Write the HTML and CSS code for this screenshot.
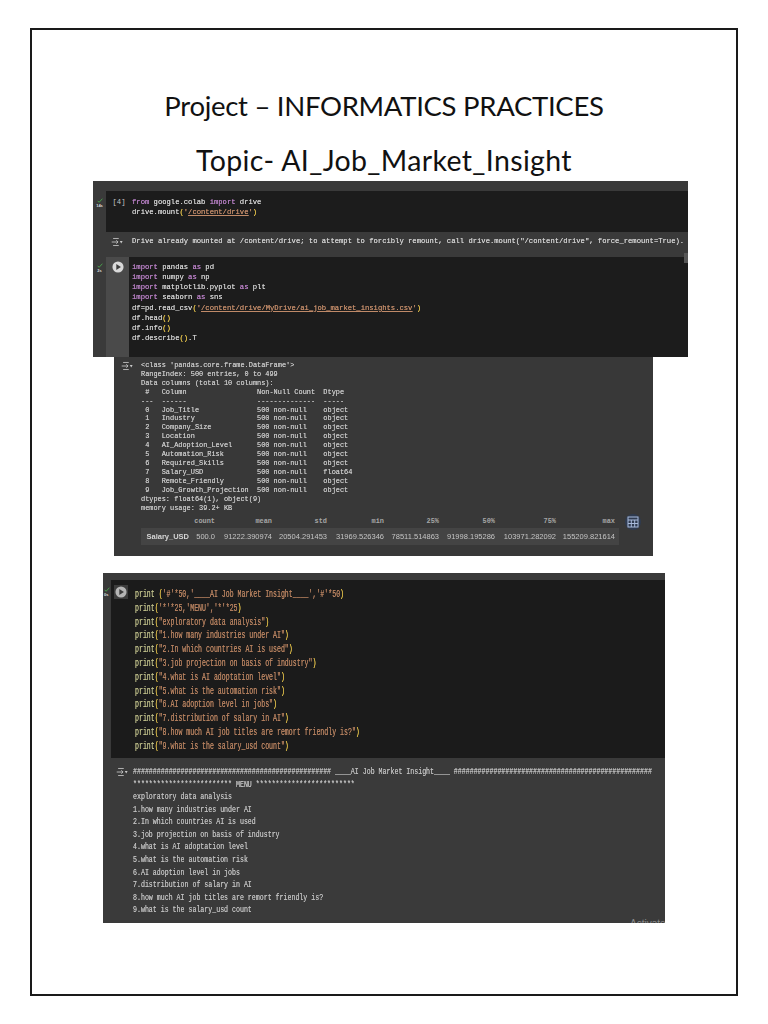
FILE: index.html
```html
<!DOCTYPE html>
<html lang="en">
<head>
<meta charset="utf-8">
<title>Project – INFORMATICS PRACTICES</title>
<link rel="stylesheet" href="styles.css">
</head>
<body>
<main class="page">
  <h1 class="title title-first">Project – INFORMATICS PRACTICES</h1>
  <h2 class="title title-second">Topic- AI_Job_Market_Insight</h2>

  <section class="shot shot-a">
    <div class="cell cell-a1">
      <div class="status"><svg class="check" viewBox="0 0 10 8"><path d="M1 4.500 3.500 7 9 1" /></svg><span class="time">14s</span></div>
      <div class="gutter-a plain"><span class="count">[4]</span></div>
      <pre class="code code-a"><span class="kw">from</span> google.colab <span class="kw">import</span> drive
drive.mount<span class="par">(</span><span class="str">'<u>/content/drive</u>'</span><span class="par">)</span></pre>
    </div>
    <div class="out out-a">
      <svg class="outicon" viewBox="0 0 17 14"><path d="M3 2h8M1 7h9M3 12h8M7.500 4.500 10 7l-2.500 2.500" /><path class="caret" d="M12.500 5.500h4L14.500 9Z" /></svg>
      <pre class="code code-a">Drive already mounted at /content/drive; to attempt to forcibly remount, call drive.mount("/content/drive", force_remount=True).</pre>
      <span class="thumb"></span>
    </div>
    <div class="cell cell-a2">
      <div class="status"><svg class="check" viewBox="0 0 10 8"><path d="M1 4.500 3.500 7 9 1" /></svg><span class="time">2s</span></div>
      <div class="gutter-a"><svg class="play" viewBox="0 0 14 14"><circle cx="7" cy="7" r="6.500" /><path class="tri" d="M5 3.600 10.400 7 5 10.400Z" /></svg></div>
      <pre class="code code-a code-top"><span class="kw">import</span> pandas <span class="kw">as</span> pd
<span class="kw">import</span> numpy <span class="kw">as</span> np
<span class="kw">import</span> matplotlib.pyplot <span class="kw">as</span> plt
<span class="kw">import</span> seaborn <span class="kw">as</span> sns
df=pd.read_csv<span class="par">(</span><span class="str">'<u>/content/drive/MyDrive/ai_job_market_insights.csv</u>'</span><span class="par">)</span>
df.head<span class="par">()</span>
df.info<span class="par">()</span>
df.describe<span class="par">()</span>.T</pre>
    </div>
  </section>

  <section class="shot shot-b">
    <div class="info">
      <svg class="outicon" viewBox="0 0 17 14"><path d="M3 2h8M1 7h9M3 12h8M7.500 4.500 10 7l-2.500 2.500" /><path class="caret" d="M12.500 5.500h4L14.500 9Z" /></svg>
      <pre class="code code-b">&lt;class 'pandas.core.frame.DataFrame'&gt;
RangeIndex: 500 entries, 0 to 499
Data columns (total 10 columns):
 #   Column                 Non-Null Count  Dtype
---  ------                 --------------  -----
 0   Job_Title              500 non-null    object
 1   Industry               500 non-null    object
 2   Company_Size           500 non-null    object
 3   Location               500 non-null    object
 4   AI_Adoption_Level      500 non-null    object
 5   Automation_Risk        500 non-null    object
 6   Required_Skills        500 non-null    object
 7   Salary_USD             500 non-null    float64
 8   Remote_Friendly        500 non-null    object
 9   Job_Growth_Projection  500 non-null    object
dtypes: float64(1), object(9)
memory usage: 39.2+ KB</pre>
    </div>
    <div class="stats">
      <div class="stats-table">
        <div class="row head">
          <span></span><span>count</span><span>mean</span><span>std</span><span>min</span><span>25%</span><span>50%</span><span>75%</span><span>max</span>
        </div>
        <div class="row body-row">
          <strong>Salary_USD</strong><span>500.0</span><span>91222.390974</span><span>20504.291453</span><span>31969.526346</span><span>78511.514863</span><span>91998.195286</span><span>103971.282092</span><span>155209.821614</span>
        </div>
      </div>
      <span class="calc"><svg viewBox="0 0 12 12"><rect x="1" y="1" width="10" height="10" /><path d="M1 4h10M1 7.500h10M4.300 4v7M7.700 4v7" /></svg></span>
    </div>
  </section>

  <section class="shot shot-c">
    <div class="cell cell-c">
      <div class="status status-c"><svg class="check" viewBox="0 0 10 8"><path d="M1 4.500 3.500 7 9 1" /></svg><span class="time">0s</span></div>
      <div class="gutter-c"><span class="play-box"><svg class="play play-c" viewBox="0 0 14 14"><circle cx="7" cy="7" r="6.500" /><path class="tri" d="M5 3.600 10.400 7 5 10.400Z" /></svg></span></div>
      <div class="squeeze"><pre class="code code-c"><span class="fn">print</span> <span class="par">(</span><span class="str">'#'*50,'____AI Job Market Insight____','#'*50</span><span class="par">)</span>
<span class="fn">print</span><span class="par">(</span><span class="str">'*'*25,'MENU','*'*25</span><span class="par">)</span>
<span class="fn">print</span><span class="par">(</span><span class="str">"exploratory data analysis"</span><span class="par">)</span>
<span class="fn">print</span><span class="par">(</span><span class="str">"1.how many industries under AI"</span><span class="par">)</span>
<span class="fn">print</span><span class="par">(</span><span class="str">"2.In which countries AI is used"</span><span class="par">)</span>
<span class="fn">print</span><span class="par">(</span><span class="str">"3.job projection on basis of industry"</span><span class="par">)</span>
<span class="fn">print</span><span class="par">(</span><span class="str">"4.what is AI adoptation level"</span><span class="par">)</span>
<span class="fn">print</span><span class="par">(</span><span class="str">"5.what is the automation risk"</span><span class="par">)</span>
<span class="fn">print</span><span class="par">(</span><span class="str">"6.AI adoption level in jobs"</span><span class="par">)</span>
<span class="fn">print</span><span class="par">(</span><span class="str">"7.distribution of salary in AI"</span><span class="par">)</span>
<span class="fn">print</span><span class="par">(</span><span class="str">"8.how much AI job titles are remort friendly is?"</span><span class="par">)</span>
<span class="fn">print</span><span class="par">(</span><span class="str">"9.what is the salary_usd count"</span><span class="par">)</span></pre></div>
    </div>
    <div class="out out-c">
      <svg class="outicon" viewBox="0 0 17 14"><path d="M3 2h8M1 7h9M3 12h8M7.500 4.500 10 7l-2.500 2.500" /><path class="caret" d="M12.500 5.500h4L14.500 9Z" /></svg>
      <div class="squeeze"><pre class="code code-d">################################################## ____AI Job Market Insight____ ##################################################
************************* MENU *************************
exploratory data analysis
1.how many industries under AI
2.In which countries AI is used
3.job projection on basis of industry
4.what is AI adoptation level
5.what is the automation risk
6.AI adoption level in jobs
7.distribution of salary in AI
8.how much AI job titles are remort friendly is?
9.what is the salary_usd count</pre></div>
      <span class="watermark">Activate</span>
    </div>
  </section>
</main>
</body>
</html>
```
FILE: styles.css
```css
* { box-sizing: border-box; }
html, body { margin: 0; background: #fff; }
body { height: 1024px; overflow: hidden; padding: 28px 0 0 30px; }

.page {
  width: 708px;
  height: 968px;
  border: 2px solid #1a1a1a;
  padding-top: 58px;
}
.title {
  margin: 0;
  text-align: center;
  font-family: Lato, "Noto Sans", sans-serif;
  font-weight: 400;
  line-height: 36px;
  color: #111;
}
.title-first { font-size: 27.5px; letter-spacing: -0.3px; }
.title-second { margin-top: 18px; font-size: 28.5px; letter-spacing: 0.36px; }

.shot { position: relative; overflow: hidden; }
.shot-a {
  width: 595px;
  height: 176px;
  margin: 3px 0 0 61px;
  padding-top: 10px;
  background: #3a3a3a;
}
.shot-b {
  width: 539px;
  height: 199px;
  margin-left: 82px;
  padding: 4px 0 0 0;
  background: #383838;
}
.shot-c {
  width: 562px;
  height: 350px;
  margin: 17px 0 0 71px;
  padding-top: 7px;
  background: #3a3a3a;
}

.code {
  margin: 0;
  font-family: "Liberation Mono", monospace;
  color: #cfcfcf;
  filter: blur(0.3px);
  text-shadow: 0 0 0.5px currentColor;
}
.code-a { font-size: 7.2px; line-height: 10.15px; }
.code-b { font-size: 6.92px; line-height: 8.9px; color: #c4c4c4; }
.code-c { font-size: 10.2px; line-height: 13.8px; color: #cfcfcf; }
.code-d { font-size: 9.6px; line-height: 12.58px; color: #bdbdbd; }
.code-top { padding-top: 5px; }

.squeeze { width: 0; }
.code-c { transform: scaleX(0.645); transform-origin: left top; }
.code-d { transform: scaleX(0.688); transform-origin: left top; }

.kw { color: #b77fc4; }
.str { color: #c08a68; }
.par { color: #e2c04a; }
.fn { color: #cfcf96; }
.code-c .str { color: #b5805f; }
.code-c .fn { color: #bcbc88; }
u { text-underline-offset: 1px; }

.cell { display: flex; background: #1c1c1c; }
.cell-a1 { height: 41px; background: linear-gradient(90deg, #3a3a3a 13px, #1c1c1c 13px); padding-top: 6px; }
.cell-a2 { height: 100px; background: linear-gradient(90deg, #3a3a3a 13px, #4a4a4a 13px, #4a4a4a 36px, #1c1c1c 36px); }
.cell-c { height: 178px; background: linear-gradient(90deg, #3a3a3a 8px, #1b1b1b 8px); }

.status { width: 13px; display: flex; flex-direction: column; align-items: center; padding-top: 1px; }
.cell-a2 .status { padding-top: 6px; }
.status-c { width: 8px; padding-top: 7px; align-items: flex-start; padding-left: 1px; }
.check { width: 6px; height: 5px; fill: none; stroke: #4caf50; stroke-width: 1.4; }
.time { font: 700 4px/5px "Liberation Sans", sans-serif; color: #ddd; }

.gutter-a { width: 26px; flex: none; display: flex; justify-content: center; }
.cell-a2 .gutter-a { padding: 4px 3px 0 0; }
.count { font: 7.2px/10px "Liberation Mono", monospace; color: #c4c4c4; }
.play { width: 12px; height: 12px; }
.play circle { fill: #d9d9d9; }
.play .tri { fill: #3d3d3d; }

.gutter-c { width: 24px; flex: none; padding: 5px 0 0 3px; }
.play-box { display: block; width: 14px; height: 14px; padding: 1px; background: #3c3c3c; }
.play-c { display: block; }
.play-c circle { fill: #b5b5b5; }
.cell-c .squeeze { padding-top: 8px; }

.out { position: relative; display: flex; }
.out-a { height: 25px; padding: 4px 0 0 18px; gap: 9px; }
.out-a .outicon { margin-top: 1px; }
.outicon { width: 12px; height: 10px; flex: none; fill: none; stroke: #c9c9c9; stroke-width: 1.2; }
.outicon .caret { fill: #c9c9c9; stroke: none; }
.thumb { position: absolute; right: 0; top: 21px; width: 4px; height: 10px; background: #565656; }

.info { display: flex; padding-left: 7px; gap: 8px; }
.stats { position: relative; display: flex; margin: 4px 0 0 27px; }
.stats-table { width: 478px; }
.row { display: grid; grid-template-columns: 50px 26px 57px 55px 57px 55px 56px 61px 59px; }
.row > * { text-align: right; padding-right: 2px; white-space: nowrap; }
.head { height: 11px; font: 700 6.9px/11px "Liberation Mono", monospace; color: #a6a6a6; }
.body-row {
  height: 17px;
  margin-top: 1px;
  background: #444;
  font: 7.5px/17px "Liberation Sans", sans-serif;
  color: #c4c4c4;
  filter: blur(0.25px);
}
.body-row strong { color: #d5d5d5; }
.calc {
  position: absolute;
  left: 484px;
  top: -2px;
  width: 16px;
  height: 16px;
  border-radius: 50%;
  background: #2f3b50;
  display: flex;
  align-items: center;
  justify-content: center;
}
.calc svg { width: 12px; height: 12px; fill: none; stroke: #a9bbdb; stroke-width: 1; }

.out-c { height: 165px; padding: 8px 0 0 13px; gap: 5px; }
.out-c .outicon { margin-top: 1px; }
.watermark {
  position: absolute;
  left: 527px;
  top: 160px;
  font: 10px/12px "Liberation Sans", sans-serif;
  color: #8a8a8a;
  white-space: nowrap;
}
```
